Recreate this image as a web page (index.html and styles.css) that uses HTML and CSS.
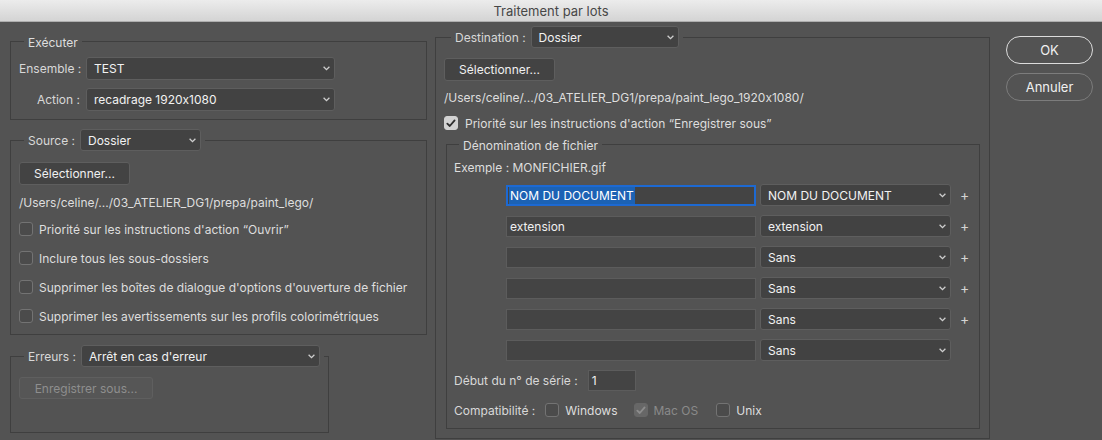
FILE: index.html
```html
<!DOCTYPE html>
<html lang="fr">
<head>
<meta charset="utf-8">
<title>Traitement par lots</title>
<link rel="stylesheet" href="styles.css">
</head>
<body>
<div class="window">
  <header class="titlebar">Traitement par lots</header>
  <div class="content">
    <div class="col-left">
      <fieldset class="group g-exec">
        <legend class="legend legend-text">Exécuter</legend>
        <div class="form-grid">
          <span class="lbl">Ensemble :</span>
          <div class="select w-exec"><span>TEST</span><svg class="chev" width="7" height="5" viewBox="0 0 7 5"><polyline points="0.6,0.8 3.5,3.7 6.4,0.8"/></svg></div>
          <span class="lbl">Action :</span>
          <div class="select w-exec"><span>recadrage 1920x1080</span><svg class="chev" width="7" height="5" viewBox="0 0 7 5"><polyline points="0.6,0.8 3.5,3.7 6.4,0.8"/></svg></div>
        </div>
      </fieldset>

      <fieldset class="group g-source">
        <legend class="legend legend-sel"><span class="lbl">Source :</span><div class="select w-source"><span>Dossier</span><svg class="chev" width="7" height="5" viewBox="0 0 7 5"><polyline points="0.6,0.8 3.5,3.7 6.4,0.8"/></svg></div></legend>
        <button class="btn w-select" type="button">Sélectionner...</button>
        <div class="path">/Users/celine/.../03_ATELIER_DG1/prepa/paint_lego/</div>
        <div class="checks">
          <div class="check"><span class="box"></span><span>Priorité sur les instructions d'action “Ouvrir”</span></div>
          <div class="check"><span class="box"></span><span>Inclure tous les sous-dossiers</span></div>
          <div class="check"><span class="box"></span><span>Supprimer les boîtes de dialogue d'options d'ouverture de fichier</span></div>
          <div class="check"><span class="box"></span><span>Supprimer les avertissements sur les profils colorimétriques</span></div>
        </div>
      </fieldset>

      <fieldset class="group g-err">
        <legend class="legend legend-sel"><span class="lbl">Erreurs :</span><div class="select w-err"><span>Arrêt en cas d'erreur</span><svg class="chev" width="7" height="5" viewBox="0 0 7 5"><polyline points="0.6,0.8 3.5,3.7 6.4,0.8"/></svg></div></legend>
        <button class="btn btn-disabled w-save" type="button" disabled>Enregistrer sous...</button>
      </fieldset>
    </div>

    <div class="col-right">
      <fieldset class="group g-dest">
        <legend class="legend legend-sel"><span class="lbl">Destination :</span><div class="select w-dest"><span>Dossier</span><svg class="chev" width="7" height="5" viewBox="0 0 7 5"><polyline points="0.6,0.8 3.5,3.7 6.4,0.8"/></svg></div></legend>
        <button class="btn w-select" type="button">Sélectionner...</button>
        <div class="path path-dest">/Users/celine/.../03_ATELIER_DG1/prepa/paint_lego_1920x1080/</div>
        <div class="check check-dest"><span class="box box-on"><svg width="10" height="9" viewBox="0 0 10 9"><polyline points="1.3,4.6 3.8,7 8.6,1.4"/></svg></span><span>Priorité sur les instructions d'action “Enregistrer sous”</span></div>

        <fieldset class="group g-naming">
          <legend class="legend legend-text">Dénomination de fichier</legend>
          <div class="example">Exemple : MONFICHIER.gif</div>
          <div class="name-rows">
            <div class="name-row">
              <div class="field field-focus"><span class="sel">NOM DU DOCUMENT</span></div>
              <div class="select w-name"><span>NOM DU DOCUMENT</span><svg class="chev" width="7" height="5" viewBox="0 0 7 5"><polyline points="0.6,0.8 3.5,3.7 6.4,0.8"/></svg></div>
              <span class="plus">+</span>
            </div>
            <div class="name-row">
              <div class="field"><span>extension</span></div>
              <div class="select w-name"><span>extension</span><svg class="chev" width="7" height="5" viewBox="0 0 7 5"><polyline points="0.6,0.8 3.5,3.7 6.4,0.8"/></svg></div>
              <span class="plus">+</span>
            </div>
            <div class="name-row">
              <div class="field"></div>
              <div class="select w-name"><span>Sans</span><svg class="chev" width="7" height="5" viewBox="0 0 7 5"><polyline points="0.6,0.8 3.5,3.7 6.4,0.8"/></svg></div>
              <span class="plus">+</span>
            </div>
            <div class="name-row">
              <div class="field"></div>
              <div class="select w-name"><span>Sans</span><svg class="chev" width="7" height="5" viewBox="0 0 7 5"><polyline points="0.6,0.8 3.5,3.7 6.4,0.8"/></svg></div>
              <span class="plus">+</span>
            </div>
            <div class="name-row">
              <div class="field"></div>
              <div class="select w-name"><span>Sans</span><svg class="chev" width="7" height="5" viewBox="0 0 7 5"><polyline points="0.6,0.8 3.5,3.7 6.4,0.8"/></svg></div>
              <span class="plus">+</span>
            </div>
            <div class="name-row">
              <div class="field"></div>
              <div class="select w-name"><span>Sans</span><svg class="chev" width="7" height="5" viewBox="0 0 7 5"><polyline points="0.6,0.8 3.5,3.7 6.4,0.8"/></svg></div>
            </div>
          </div>
          <div class="serial-row">
            <span class="lbl">Début du n° de série :</span>
            <div class="field w-serial"><span>1</span></div>
          </div>
          <div class="compat-row">
            <span class="lbl">Compatibilité :</span>
            <div class="check"><span class="box"></span><span>Windows</span></div>
            <div class="check check-disabled"><span class="box box-dis"><svg width="10" height="9" viewBox="0 0 10 9"><polyline points="1.3,4.6 3.8,7 8.6,1.4"/></svg></span><span>Mac OS</span></div>
            <div class="check check-last"><span class="box"></span><span>Unix</span></div>
          </div>
        </fieldset>
      </fieldset>
    </div>

    <div class="col-buttons">
      <button class="pill pill-default" type="button">OK</button>
      <button class="pill" type="button">Annuler</button>
    </div>
  </div>
</div>
</body>
</html>
```

FILE: styles.css
```css
* { box-sizing: border-box; }
html, body { margin: 0; padding: 0; }
body {
  width: 1102px;
  height: 440px;
  overflow: hidden;
  background: #535353;
  font-family: Inter, "Liberation Sans", Arial, sans-serif;
  font-size: 12px;
  font-feature-settings: "calt" 0;
  color: #dedede;
}
.window { width: 1102px; height: 440px; }

.titlebar {
  height: 22px;
  background: linear-gradient(#ececec, #d4d4d4);
  border-bottom: 1px solid #aeaeae;
  color: #474747;
  font-size: 13px;
  display: flex;
  align-items: center;
  justify-content: center;
}

.content { display: flex; padding-left: 10px; }
.col-left { width: 417px; display: flex; flex-direction: column; }
.col-right { width: 555px; margin-left: 8px; }
.col-buttons {
  margin-left: 16px;
  padding-top: 14px;
  display: flex;
  flex-direction: column;
  gap: 9px;
}

/* group boxes */
.group {
  margin: 0;
  min-width: 0;
  border: 1px solid #3f3f3f;
  padding: 0 8px;
}
.legend {
  margin-left: 5px;
  padding: 0 4px;
}
.legend-text { line-height: 15px; padding-top: 3px; }
.legend-sel { display: flex; align-items: center; gap: 5px; }

.g-exec { margin-top: 10px; padding-top: 7px; padding-bottom: 8px; }
.g-source { margin-top: 9px; padding-top: 11px; padding-bottom: 8px; }
.g-err { width: 319px; margin-top: 10px; padding-top: 10px; padding-bottom: 33px; }
.g-dest { margin-top: 4px; padding-top: 10px; padding-bottom: 9px; }
.g-dest > .legend { margin-left: 7px; }
.g-naming { margin: 2px 1px 0 2px; padding: 7px 7px 8px 7px; }
.g-naming > .legend { margin-left: 5px; }

/* grid of labels + selects */
.form-grid {
  display: grid;
  grid-template-columns: 61px 249px;
  column-gap: 6px;
  row-gap: 8px;
  align-items: center;
}
.form-grid .lbl { text-align: right; white-space: nowrap; }
.lbl { color: #d8d8d8; white-space: nowrap; }

/* select */
.select {
  display: flex;
  align-items: center;
  justify-content: space-between;
  height: 22px;
  padding: 0 4px 0 7px;
  background: #424242;
  border: 1px solid #5e5e5e;
  border-radius: 3px;
  color: #f2f2f2;
}
.form-grid .select { height: 23px; }
.chev { fill: none; stroke: #cfcfcf; stroke-width: 1.3; flex: none; }
.w-exec { width: 249px; }
.w-source { width: 121px; }
.w-err { width: 239px; }
.w-dest { width: 148px; }
.w-name { width: 191px; }

/* push buttons */
.btn {
  display: block;
  height: 23px;
  padding: 0;
  background: #434343;
  border: 1px solid #5e5e5e;
  border-radius: 3px;
  color: #f0f0f0;
  font-family: inherit;
  font-size: 12px;
  font-feature-settings: "calt" 0;
  text-align: center;
}
.w-select { width: 111px; }
.w-save { width: 134px; height: 22px; }
.btn-disabled { background: #565656; border-color: #5f5f5f; color: #8e8e8e; }

.path { margin-top: 8px; height: 20px; line-height: 20px; white-space: nowrap; }
.path-dest { margin-top: 7px; }

/* checkboxes */
.checks { margin-top: 6px; display: flex; flex-direction: column; gap: 9px; }
.check { display: flex; align-items: center; gap: 6px; height: 20px; white-space: nowrap; }
.check-dest { margin-top: 5px; gap: 7px; }
.box {
  width: 14px;
  height: 14px;
  flex: none;
  border: 1px solid #737373;
  background: #4b4b4b;
  border-radius: 3px;
  display: flex;
  align-items: center;
  justify-content: center;
}
.box svg { fill: none; stroke-width: 1.8; stroke-linecap: round; stroke-linejoin: round; }
.box-on { background: #d2d2d2; border-color: #d2d2d2; }
.box-on svg { stroke: #2e2e2e; }
.box-dis { background: #676767; border-color: #676767; }
.box-dis svg { stroke: #8d8d8d; }
.check-disabled { color: #8a8a8a; }

/* naming */
.example { height: 16px; line-height: 16px; }
.name-rows { margin-top: 8px; display: flex; flex-direction: column; gap: 9px; }
.name-row { display: flex; align-items: center; height: 22px; padding-left: 52px; }
.name-row .select { margin-left: 4px; }
.field {
  width: 250px;
  height: 21px;
  padding-left: 3px;
  background: #444444;
  border: 1px solid #5c5c5c;
  display: flex;
  align-items: center;
  color: #f0f0f0;
}
.field-focus { border: 2px solid #1d69d2; padding-left: 1px; }
.sel { background: #1c62b4; color: #ffffff; line-height: 17px; padding: 0 1px; }
.plus { margin-left: 9px; color: #d4d4d4; font-size: 14px; line-height: 14px; }

.serial-row { margin-top: 9px; display: flex; align-items: center; gap: 10px; height: 21px; }
.w-serial { width: 48px; height: 21px; }
.compat-row { margin-top: 9px; display: flex; align-items: center; height: 20px; }
.compat-row .check { margin-left: 16px; }
.compat-row .lbl + .check { margin-left: 10px; }
.compat-row .check-last { margin-left: 18px; }

/* OK / Annuler */
.pill {
  width: 87px;
  height: 28px;
  padding: 0;
  border-radius: 14px;
  background: transparent;
  border: 1px solid #7c7c7c;
  color: #f0f0f0;
  font-family: inherit;
  font-size: 13px;
}
.pill-default { border-color: #dcdcdc; }
```
